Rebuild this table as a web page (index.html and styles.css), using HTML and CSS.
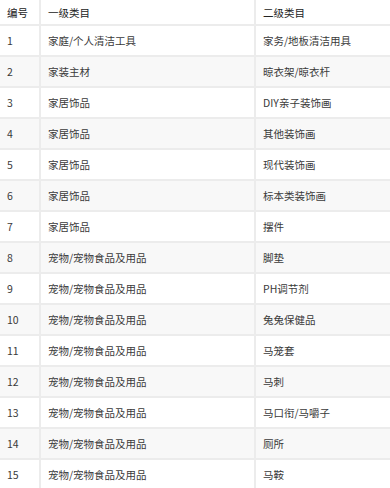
FILE: index.html
```html
<!DOCTYPE html>
<html lang="zh">
<head>
<meta charset="utf-8">
<link rel="stylesheet" href="styles.css">
</head>
<body>
<table class="cat-table">
  <colgroup><col class="c-no"><col class="c-l1"><col class="c-l2"></colgroup>
  <thead>
    <tr><th>编号</th><th>一级类目</th><th>二级类目</th></tr>
  </thead>
  <tbody>
    <tr><td>1</td><td>家庭/个人清洁工具</td><td>家务/地板清洁用具</td></tr>
    <tr><td>2</td><td>家装主材</td><td>晾衣架/晾衣杆</td></tr>
    <tr><td>3</td><td>家居饰品</td><td>DIY亲子装饰画</td></tr>
    <tr><td>4</td><td>家居饰品</td><td>其他装饰画</td></tr>
    <tr><td>5</td><td>家居饰品</td><td>现代装饰画</td></tr>
    <tr><td>6</td><td>家居饰品</td><td>标本类装饰画</td></tr>
    <tr><td>7</td><td>家居饰品</td><td>摆件</td></tr>
    <tr><td>8</td><td>宠物/宠物食品及用品</td><td>脚垫</td></tr>
    <tr><td>9</td><td>宠物/宠物食品及用品</td><td>PH调节剂</td></tr>
    <tr><td>10</td><td>宠物/宠物食品及用品</td><td>兔兔保健品</td></tr>
    <tr><td>11</td><td>宠物/宠物食品及用品</td><td>马笼套</td></tr>
    <tr><td>12</td><td>宠物/宠物食品及用品</td><td>马刺</td></tr>
    <tr><td>13</td><td>宠物/宠物食品及用品</td><td>马口衔/马嚼子</td></tr>
    <tr><td>14</td><td>宠物/宠物食品及用品</td><td>厕所</td></tr>
    <tr><td>15</td><td>宠物/宠物食品及用品</td><td>马鞍</td></tr>
  </tbody>
</table>
</body>
</html>
```
FILE: styles.css
```css
html, body {
  margin: 0;
  padding: 0;
  background: #fff;
}
body {
  font-family: "Noto Sans CJK SC", "Noto Sans", sans-serif;
  font-size: 10.5px;
  color: #3a3a3a;
}
.cat-table {
  width: 390px;
  border-collapse: collapse;
  table-layout: fixed;
}
.c-no { width: 40px; }
.c-l1 { width: 215px; }
.c-l2 { width: 135px; }
.cat-table th,
.cat-table td {
  text-align: left;
  padding: 0 0 0 7px;
  border-right: 2px solid #ececec;
  border-bottom: 2px solid #ececec;
  white-space: nowrap;
  overflow: hidden;
}
.cat-table th:last-child,
.cat-table td:last-child {
  border-right: none;
}
.cat-table th {
  height: 24px;
  font-weight: normal;
  color: #222;
}
.cat-table td {
  height: 29px;
}
.cat-table tbody tr:nth-child(even) td {
  background: #f8f8f8;
}
```
